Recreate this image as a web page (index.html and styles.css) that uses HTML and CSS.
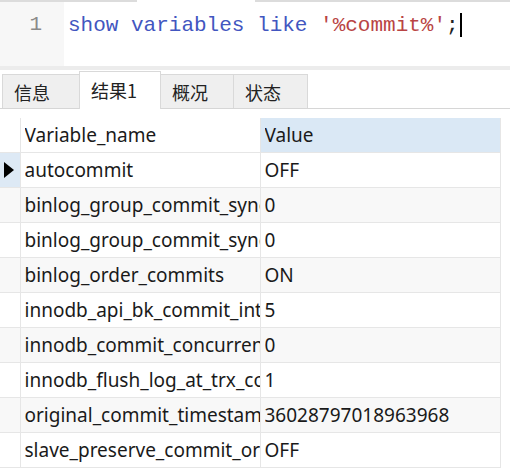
FILE: index.html
```html
<!DOCTYPE html>
<html>
<head>
<meta charset="utf-8">
<link rel="stylesheet" href="styles.css">
</head>
<body>
<div class="topbar"><div class="seg-a"></div><div class="seg-b"></div><div class="seg-c"></div></div>
<div class="editor">
  <div class="gutter">1</div>
  <div class="code"><span class="kw">show variables like </span><span class="str">'%commit%'</span><span class="punc">;</span><span class="cursor"></span></div>
</div>
<div class="sep"></div>
<div class="tabs">
  <div class="tab t1">信息</div>
  <div class="tab active t2">结果1</div>
  <div class="tab t3">概况</div>
  <div class="tab t4">状态</div>
</div>
<div class="gridwrap">
  <table class="grid">
    <colgroup><col class="c0"><col class="c1"><col class="c2"></colgroup>
    <thead>
      <tr><th class="rh"></th><th><div class="cell">Variable_name</div></th><th class="hv"><div class="cell">Value</div></th></tr>
    </thead>
    <tbody>
      <tr class="cur"><td class="rh"><span class="arrow"></span></td><td><div class="cell">autocommit</div></td><td><div class="cell">OFF</div></td></tr>
      <tr class="alt"><td class="rh"></td><td><div class="cell">binlog_group_commit_sync_delay</div></td><td><div class="cell">0</div></td></tr>
      <tr><td class="rh"></td><td><div class="cell">binlog_group_commit_sync_no_delay_count</div></td><td><div class="cell">0</div></td></tr>
      <tr class="alt"><td class="rh"></td><td><div class="cell">binlog_order_commits</div></td><td><div class="cell">ON</div></td></tr>
      <tr><td class="rh"></td><td><div class="cell">innodb_api_bk_commit_interval</div></td><td><div class="cell">5</div></td></tr>
      <tr class="alt"><td class="rh"></td><td><div class="cell">innodb_commit_concurrency</div></td><td><div class="cell">0</div></td></tr>
      <tr><td class="rh"></td><td><div class="cell">innodb_flush_log_at_trx_commit</div></td><td><div class="cell">1</div></td></tr>
      <tr class="alt"><td class="rh"></td><td><div class="cell">original_commit_timestamp</div></td><td><div class="cell">36028797018963968</div></td></tr>
      <tr><td class="rh"></td><td><div class="cell">slave_preserve_commit_order</div></td><td><div class="cell">OFF</div></td></tr>
    </tbody>
  </table>
</div>
</body>
</html>
```
FILE: styles.css
```css
html, body { margin: 0; padding: 0; background: #fff; }
body { width: 510px; height: 473px; overflow: hidden; font-family: "Noto Sans", "Noto Sans CJK SC", sans-serif; }

.topbar { display: flex; height: 2px; }
.seg-a { width: 137px; background: #dcdcdc; }
.seg-b { width: 118px; background: #fff; }
.seg-c { flex: 1; background: #dcdcdc; }

.editor { display: flex; height: 64px; background: #fff; }
.gutter { width: 42px; padding-right: 22px; text-align: right; background: #f7f7f7; color: #8a8a8a;
  font-family: "Liberation Mono", monospace; font-size: 21px; line-height: 46px; }
.code { padding-left: 4px; font-family: "Liberation Mono", monospace; font-size: 21px; white-space: pre; display: flex; align-items: center; height: 46px; }
.kw { color: #4256c0; }
.str { color: #b94444; }
.punc { color: #222; }
.cursor { display: inline-block; width: 2px; height: 24px; background: #000; margin-left: 1px; }

.sep { height: 4px; background: #ececec; }

.tabs { display: flex; align-items: flex-end; height: 38px; padding-left: 2px; border-bottom: 1px solid #d6d6d6; font-family: "Noto Sans CJK SC", sans-serif; font-size: 18px; color: #222; }
.tab { height: 34px; box-sizing: border-box; border: 1px solid #d9d9d9; border-bottom: none; background: #efefef; display: flex; align-items: center; padding-left: 11px; margin-right: -1px; }
.t1 { width: 78px; }
.t2 { width: 82px; }
.t3 { width: 74px; }
.t4 { width: 75px; }
.tab.active { background: #fff; height: 38px; margin-bottom: -1px; padding-bottom: 2px; position: relative; }

.gridwrap { padding-top: 9px; }
.grid { border-collapse: collapse; table-layout: fixed; width: 500px; font-size: 19px; color: #1a1a1a; }
.c0 { width: 20px; }
.c1 { width: 240px; }
.c2 { width: 240px; }
.grid th, .grid td { border: 1px solid #e6e6e6; padding: 0 0 0 4px; white-space: nowrap; overflow: hidden; text-align: left; font-weight: normal; height: 34px; box-sizing: border-box; }
.cell { overflow: hidden; white-space: nowrap; }
.grid thead th { height: 34px; border-top: none; }
.grid thead th.rh { border-left: none; }
.grid .hv { background: #dae8f5; }
.grid td.rh { padding: 0; border-left: none; }
.grid tbody td { height: 35px; }
.grid tr.alt td { background: #f8f8f8; }
.grid tr.cur td.rh { background: #dde9f5; }
.arrow { display: block; width: 0; height: 0; margin-left: 4px; border-top: 8px solid transparent; border-bottom: 8px solid transparent; border-left: 10px solid #000; }
```
